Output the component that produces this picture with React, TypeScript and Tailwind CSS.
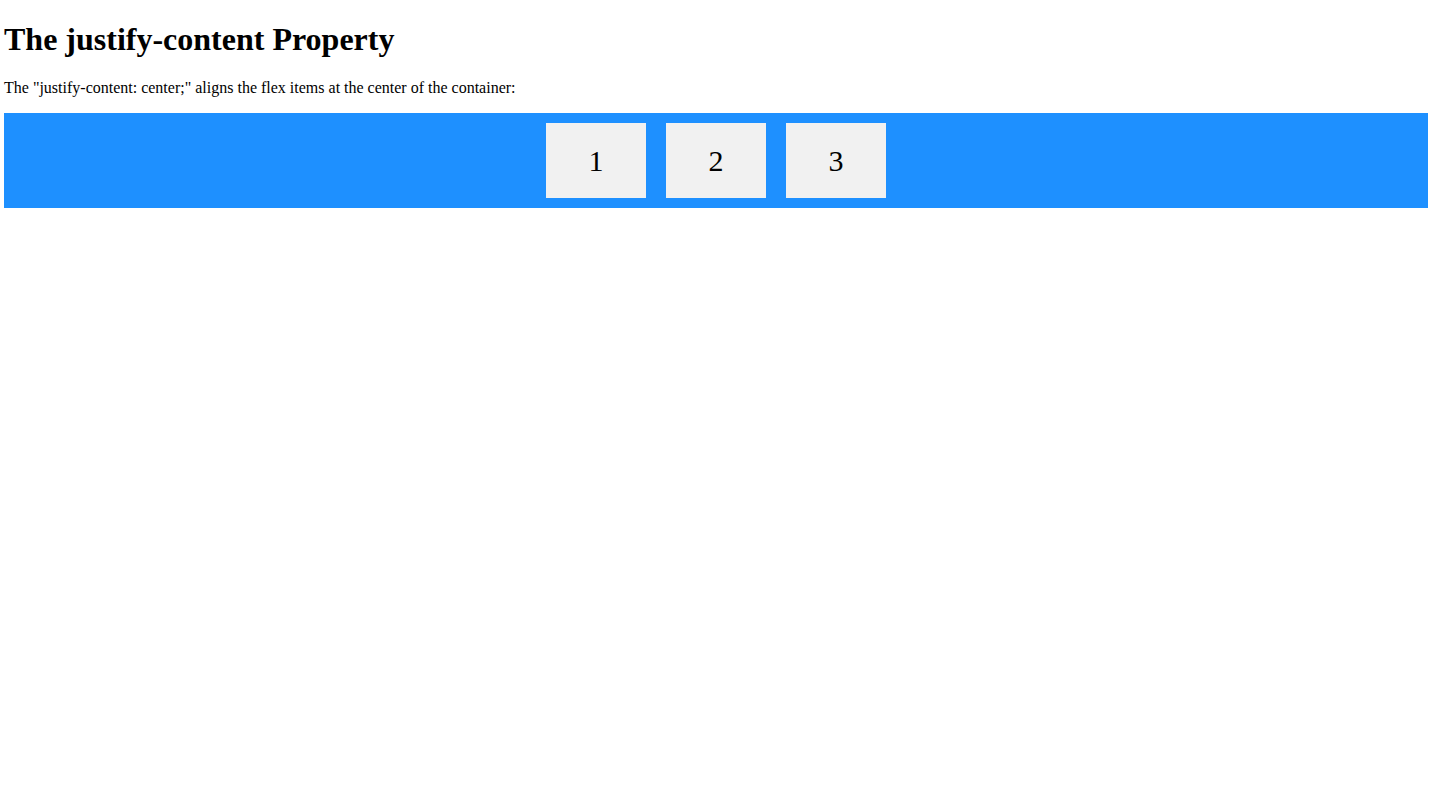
import React from 'react';

const App: React.FC = () => {
  return (
    <div className="pl-[4px] pr-[7px] text-black bg-white min-h-screen" style={{ fontFamily: '"Liberation Serif", "Times New Roman", serif' }}>
      <h1 className="text-[32px] font-bold leading-[37px] pt-[21px] mb-[21px]">The justify-content Property</h1>
      <p className="text-[16px] leading-[18px] mb-[16px]">The "justify-content: center;" aligns the flex items at the center of the container:</p>
      <div className="flex justify-center bg-[#1e90ff]">
        {['1', '2', '3'].map((n) => (
          <div key={n} className="bg-[#f1f1f1] w-[100px] m-[10px] text-center leading-[75px] text-[30px]">
            {n}
          </div>
        ))}
      </div>
    </div>
  );
};

export default App;
